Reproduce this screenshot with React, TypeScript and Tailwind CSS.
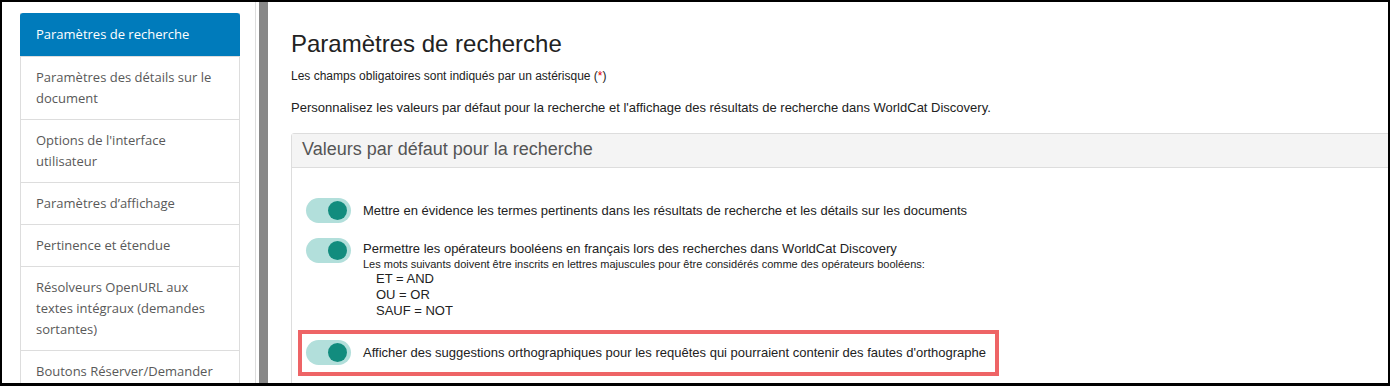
import React from 'react';

const navItems: string[] = [
  'Paramètres des détails sur le document',
  "Options de l'interface utilisateur",
  'Paramètres d’affichage',
  'Pertinence et étendue',
  'Résolveurs OpenURL aux textes intégraux (demandes sortantes)',
  'Boutons Réserver/Demander',
];

const Toggle: React.FC = () => (
  <div className="relative w-[45px] h-[25px] shrink-0 rounded-full bg-[#b2dfdb]">
    <div className="absolute right-[4px] top-[3px] w-[19px] h-[19px] rounded-full bg-[#128c7e]" />
  </div>
);

const Sidebar: React.FC = () => (
  <div className="w-[254px] shrink-0 border-r border-[#dddddd] pl-[18px] pr-[15px] pt-[11px] font-['Open_Sans',sans-serif] text-[13px] leading-[21px]">
    <div className="w-[220px] h-[400px] border-x border-[#dddddd]">
      <div className="-mx-px bg-[#007bbb] text-white px-[16px] py-[11px] rounded-t-[3px]">
        Paramètres de recherche
      </div>
      {navItems.map((item) => (
        <div key={item} className="border-t border-[#dddddd] px-[15px] py-[10px] text-[#595959]">
          {item}
        </div>
      ))}
    </div>
  </div>
);

export default function App() {
  return (
    <div className="w-[1390px] h-[386px] overflow-hidden bg-white border-black border-t-2 border-x-2 border-b-[3px] flex">
      <Sidebar />
      <div className="w-[3px] shrink-0 bg-white" />
      <div className="w-[9px] shrink-0 bg-[#888888]" />
      <div className="flex-1 overflow-hidden pl-[23px] pt-[28px] font-['Liberation_Sans',Arial,sans-serif] text-[#222222]">
        <h1 className="text-[24px] leading-[28px]">Paramètres de recherche</h1>
        <p className="mt-[10px] text-[12px] leading-[16px]">
          Les champs obligatoires sont indiqués par un astérisque (<span className="text-[#e00000]">*</span>)
        </p>
        <p className="mt-[15px] text-[13px] leading-[18px]">
          Personnalisez les valeurs par défaut pour la recherche et l'affichage des résultats de recherche dans WorldCat Discovery.
        </p>
        <div className="mt-[16px] -mr-[20px] border border-[#dddddd] rounded-t-[3px] h-[300px]">
          <div className="bg-[#f4f4f4] border-b border-[#dddddd] pl-[10px] pt-[5px] pb-[8px] text-[18px] leading-[20px] text-[#555555]">
            Valeurs par défaut pour la recherche
          </div>
          <div className="pl-[6px] pt-[30px]">
            <div className="ml-[8px] flex items-center gap-[12px]">
              <Toggle />
              <span className="text-[13px] leading-[16px]">
                Mettre en évidence les termes pertinents dans les résultats de recherche et les détails sur les documents
              </span>
            </div>
            <div className="ml-[8px] mt-[15px] flex items-start gap-[12px]">
              <Toggle />
              <div className="pt-[3px]">
                <div className="text-[13px] leading-[16px]">
                  Permettre les opérateurs booléens en français lors des recherches dans WorldCat Discovery
                </div>
                <div className="text-[11px] leading-[14px]">
                  Les mots suivants doivent être inscrits en lettres majuscules pour être considérés comme des opérateurs booléens:
                </div>
                <div className="pl-[13px] text-[13px] leading-[16px]">
                  <div>ET = AND</div>
                  <div>OU = OR</div>
                  <div>SAUF = NOT</div>
                </div>
              </div>
            </div>
            <div className="mt-[11px] w-[701px] border-4 border-[#ee6466] pl-[4px] pt-[6px] pb-[7px] flex items-center gap-[12px]">
              <Toggle />
              <span className="text-[13px] leading-[16px]">
                Afficher des suggestions orthographiques pour les requêtes qui pourraient contenir des fautes d'orthographe
              </span>
            </div>
          </div>
        </div>
      </div>
    </div>
  );
}
